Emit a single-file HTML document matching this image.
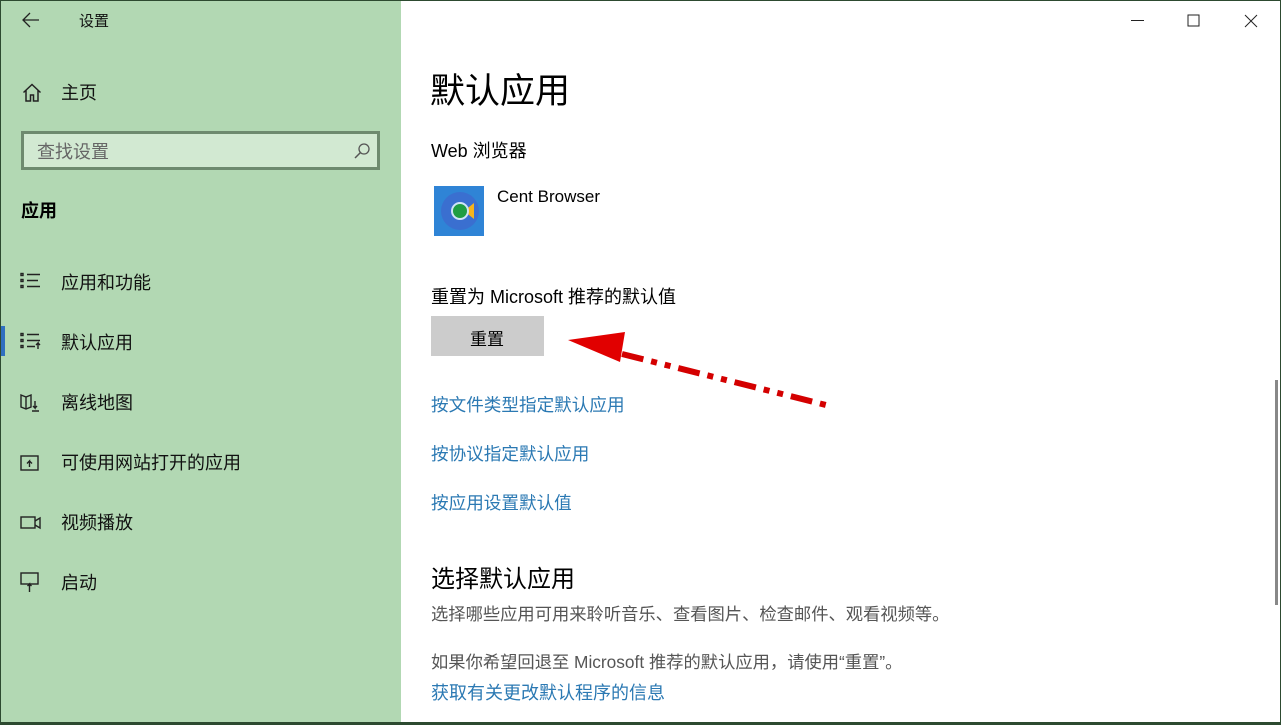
<!DOCTYPE html>
<html><head><meta charset="utf-8"><style>
*{margin:0;padding:0;box-sizing:border-box}
body{width:1281px;height:725px;position:relative;overflow:hidden;background:#fff;font-family:"Liberation Sans","Noto Sans CJK SC",sans-serif;color:#000}
.side{position:absolute;left:0;top:0;width:401px;height:725px;background:#b2d8b3}
.t{position:absolute;white-space:nowrap}
.s{font-size:18px;color:#111}
.link{color:#2b79b3;font-size:17.6px}
svg{position:absolute}
</style></head><body>
<div class="side"></div>
<svg style="left:22px;top:12px" width="18" height="16" viewBox="0 0 18 16"><path d="M8 1L1 8l7 7M1 8h16" fill="none" stroke="#222" stroke-width="1.3"/></svg>
<div class="t" style="left:79px;top:10px;font-size:15px;color:#111">设置</div>
<svg style="left:22px;top:83px" width="20" height="19" viewBox="0 0 20 19"><path d="M1.5 9.5L10 1.5l8.5 8M4 7.5V18h4.5v-6h3v6H16V7.5" fill="none" stroke="#222" stroke-width="1.5"/></svg>
<div class="t s" style="left:61px;top:79px">主页</div>
<div style="position:absolute;left:21px;top:131px;width:359px;height:39px;border:3px solid #6e8a6f;background:#d2e9d2"></div>
<div class="t" style="left:37px;top:138px;font-size:18px;color:#666">查找设置</div>
<svg style="left:353px;top:142px" width="18" height="18" viewBox="0 0 18 18"><circle cx="11" cy="7" r="5" fill="none" stroke="#555" stroke-width="1.3"/><path d="M7.5 10.5L2 16" stroke="#555" stroke-width="1.5"/></svg>
<div class="t" style="left:21px;top:197px;font-size:18px;font-weight:bold">应用</div>
<div style="position:absolute;left:0;top:326px;width:5px;height:30px;background:#2f6fc0"></div>
<svg style="left:20px;top:272px" width="22" height="20" viewBox="0 0 22 20"><g fill="none" stroke="#222" stroke-width="1.4"><rect x="1" y="1.5" width="2" height="2"/><rect x="1" y="7.5" width="2" height="2"/><rect x="1" y="13.5" width="2" height="2"/><path d="M7 2.5h13M7 8.5h11M7 14.5h13"/></g></svg>
<div class="t s" style="left:61px;top:269px">应用和功能</div>
<svg style="left:20px;top:332px" width="22" height="20" viewBox="0 0 22 20"><g fill="none" stroke="#222" stroke-width="1.4"><rect x="1" y="1.5" width="2" height="2"/><rect x="1" y="7.5" width="2" height="2"/><rect x="1" y="13.5" width="2" height="2"/><path d="M7 2.5h12M7 8.5h13M7 14.5h8M18 17v-6l-2 2M18 11l2 2"/></g></svg>
<div class="t s" style="left:61px;top:329px">默认应用</div>
<svg style="left:20px;top:393px" width="22" height="20" viewBox="0 0 22 20"><g fill="none" stroke="#222" stroke-width="1.4"><path d="M1 2l5 2 5-2v12l-5 2-5-2zM6 4v12M15 8v7l-2-2M15 15l2-2M12 18h7"/></g></svg>
<div class="t s" style="left:61px;top:389px">离线地图</div>
<svg style="left:20px;top:453px" width="22" height="20" viewBox="0 0 22 20"><g fill="none" stroke="#222" stroke-width="1.4"><rect x="1" y="3" width="17" height="14"/><path d="M9.5 14V8l-2.5 2.5M9.5 8l2.5 2.5"/></g></svg>
<div class="t s" style="left:61px;top:449px">可使用网站打开的应用</div>
<svg style="left:20px;top:513px" width="22" height="20" viewBox="0 0 22 20"><g fill="none" stroke="#222" stroke-width="1.4"><rect x="1" y="4" width="14" height="11"/><path d="M15 8l5-3v10l-5-3"/></g></svg>
<div class="t s" style="left:61px;top:509px">视频播放</div>
<svg style="left:20px;top:572px" width="22" height="22" viewBox="0 0 22 22"><g fill="none" stroke="#222" stroke-width="1.4"><rect x="1" y="1" width="17" height="11"/><path d="M9.5 20v-8l-2 2M9.5 12l2 2"/></g></svg>
<div class="t s" style="left:61px;top:569px">启动</div>

<svg style="left:1131px;top:19px" width="14" height="4"><path d="M0 1.5h13" stroke="#222" stroke-width="1"/></svg>
<svg style="left:1187px;top:14px" width="14" height="14"><rect x="1" y="1" width="11" height="11" fill="none" stroke="#222" stroke-width="1"/></svg>
<svg style="left:1244px;top:14px" width="14" height="14"><path d="M1 1l12 12M13 1L1 13" stroke="#222" stroke-width="1"/></svg>

<div class="t" style="left:430px;top:63px;font-size:35px;color:#000">默认应用</div>
<div class="t" style="left:431px;top:137px;font-size:18px">Web 浏览器</div>
<div style="position:absolute;left:434px;top:186px;width:50px;height:50px;background:#2f84d6"></div>
<svg style="left:434px;top:186px" width="50" height="50" viewBox="0 0 50 50"><circle cx="26" cy="25" r="19" fill="#3a6fd0"/><path d="M30 25l10-8v16z" fill="#f7b41c"/><circle cx="26" cy="25" r="8" fill="#1f9d43" stroke="#cfe4f7" stroke-width="2"/></svg>
<div class="t" style="left:497px;top:187px;font-size:17px">Cent Browser</div>
<div class="t" style="left:431px;top:283px;font-size:18px">重置为 Microsoft 推荐的默认值</div>
<div style="position:absolute;left:431px;top:316px;width:113px;height:40px;background:#cccccc"></div>
<div class="t" style="left:470px;top:325px;font-size:17px">重置</div>
<svg style="left:560px;top:330px" width="285" height="90" viewBox="0 0 285 90"><path d="M8 10L65 2 60 32z" fill="#e10000"/><path d="M62 24L270 76" stroke="#d40000" stroke-width="6" stroke-dasharray="22 8 6 8 6 8" fill="none"/></svg>
<div class="t link" style="left:431px;top:392px">按文件类型指定默认应用</div>
<div class="t link" style="left:431px;top:441px">按协议指定默认应用</div>
<div class="t link" style="left:431px;top:490px">按应用设置默认值</div>
<div class="t" style="left:431px;top:559px;font-size:24px">选择默认应用</div>
<div class="t" style="left:431px;top:600px;font-size:17.3px;color:#555">选择哪些应用可用来聆听音乐、查看图片、检查邮件、观看视频等。</div>
<div class="t" style="left:431px;top:648px;font-size:17.3px;color:#555">如果你希望回退至 Microsoft 推荐的默认应用，请使用“重置”。</div>
<div class="t link" style="left:431px;top:679px;font-size:18px">获取有关更改默认程序的信息</div>
<div style="position:absolute;left:1275px;top:380px;width:3px;height:225px;background:#888"></div>
<div style="position:absolute;left:0;top:0;width:1281px;height:725px;border:1px solid #2d4a30;border-bottom-width:3px;pointer-events:none"></div>
</body></html>
